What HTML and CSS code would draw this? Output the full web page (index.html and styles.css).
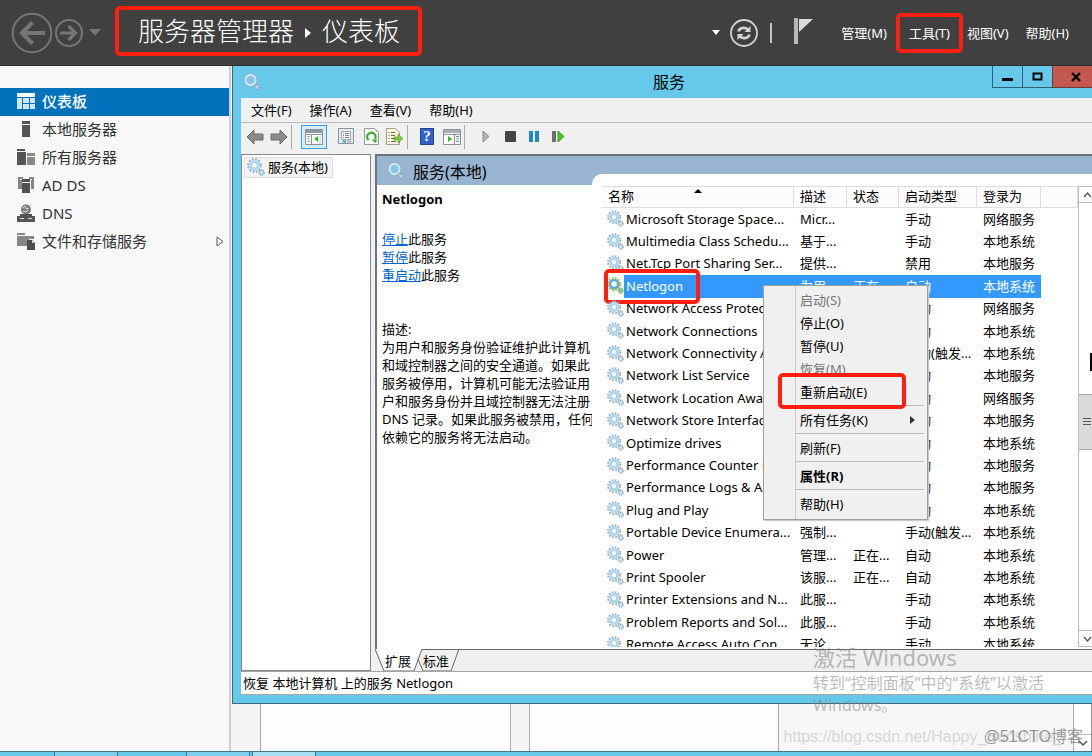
FILE: index.html
```html
<!DOCTYPE html>
<html lang="zh-CN">
<head>
<meta charset="utf-8">
<title>服务器管理器</title>
<link rel="stylesheet" href="styles.css">
</head>
<body>
<svg class="defs" width="0" height="0" aria-hidden="true">
  <symbol id="gear" viewBox="0 0 18 18">
    <circle cx="7.5" cy="7.5" r="6.400" fill="none" stroke="#8ba9bd" stroke-width="2" stroke-dasharray="1.700 1.650"/>
    <circle cx="7.5" cy="7.5" r="4.400" fill="#fff" stroke="#b3daf1" stroke-width="2.800"/>
    <circle cx="7.5" cy="7.5" r="2.800" fill="#fff" stroke="#93aebf" stroke-width=".7"/>
    <circle cx="14.500" cy="14.500" r="2.600" fill="#b9d7ea" stroke="#8caabf" stroke-width="1.400" stroke-dasharray="1.200 1"/>
    <circle cx="14.500" cy="14.500" r=".8" fill="#fff"/>
  </symbol>
  <symbol id="gear-on" viewBox="0 0 18 18">
    <circle cx="7.5" cy="7.5" r="6.400" fill="none" stroke="#9fce2c" stroke-width="2.200" stroke-dasharray="1.900 1.450"/>
    <circle cx="7.5" cy="7.5" r="4.300" fill="#fff" stroke="#5fa9e4" stroke-width="2.800"/>
    <circle cx="14.500" cy="14.500" r="2.600" fill="#5fa9e4" stroke="#9fce2c" stroke-width="1.600" stroke-dasharray="1.200 1"/>
    <circle cx="14.500" cy="14.500" r=".8" fill="#fff"/>
  </symbol>
  <symbol id="ring" viewBox="0 0 18 18">
    <circle cx="7.5" cy="7" r="5.200" fill="#86c3e6" stroke="#d3e5f0" stroke-width="2.400"/>
    <circle cx="7.5" cy="7" r="6.600" fill="none" stroke="#86a9c0" stroke-width=".8"/>
    <circle cx="14" cy="14" r="2.500" fill="#b8d4e6" stroke="#7d9db5" stroke-width="1.500" stroke-dasharray="1.200 .9"/>
  </symbol>
</svg>

<header class="top">
  <nav class="history">
    <button class="plain" aria-label="后退"><svg width="42" height="42" viewBox="0 0 42 42" fill="none" stroke="#767676"><circle cx="21" cy="21" r="19.3" stroke-width="2"/><path d="M34 21H11M21.5 10.500 11 21l10.500 10.500" stroke-width="4.200"/></svg></button>
    <button class="plain" aria-label="前进"><svg width="30" height="30" viewBox="0 0 30 30" fill="none" stroke="#767676"><circle cx="15" cy="15" r="13" stroke-width="2"/><path d="M6 15h15M14.500 8l7 7-7 7" stroke-width="3.200"/></svg></button>
    <button class="plain" aria-label="历史记录"><svg width="12" height="8" viewBox="0 0 12 8"><path d="M0 0h12L6 7z" fill="#767676"/></svg></button>
  </nav>
  <h1 class="crumbs mark">服务器管理器<svg width="6" height="10" viewBox="0 0 6 10"><path d="M0 0l6 5-6 5z" fill="#fff"/></svg>仪表板</h1>
  <div class="top-tools">
    <button class="plain" aria-label="更多"><svg width="8" height="5" viewBox="0 0 8 5"><path d="M0 0h8L4 5z" fill="#fff"/></svg></button>
    <button class="plain refresh" aria-label="刷新"><svg width="28" height="28" viewBox="0 0 28 28" fill="none" stroke="#d4d4d4"><circle cx="14" cy="14" r="13" stroke-width="1.800"/><path d="M8.500 12.500c.8-3.500 6-5 9.500-2M19.500 15.500c-.8 3.500-6 5-9.500 2" stroke-width="2.600"/><path d="M20.500 7v6h-6zM7.500 21v-6h6z" fill="#d4d4d4" stroke="none"/></svg></button>
    <span class="bar"></span>
    <button class="plain flag" aria-label="通知"><svg width="19" height="26" viewBox="0 0 19 26"><path d="M0 0h4v26H0z" fill="#b9b9b9"/><path d="M5 1h14L5 14z" fill="#dcdcdc"/></svg></button>
  </div>
  <nav class="top-menu">
    <button class="plain">管理(M)</button>
    <button class="plain mark tools">工具(T)</button>
    <button class="plain">视图(V)</button>
    <button class="plain help">帮助(H)</button>
  </nav>
</header>

<main class="workspace">
  <nav class="side">
    <a class="side-item current" href="#"><svg width="18" height="18" viewBox="0 0 18 18"><path d="M0 1h18v4H0z" fill="#fff"/><path d="M0 6h5v11H0zM6 6h6v5H6zM6 12h6v5H6zM13 6h5v5h-5zM13 12h5v5h-5z" fill="#cfe6f5"/></svg>仪表板</a>
    <a class="side-item" href="#"><svg width="18" height="18" viewBox="0 0 18 18"><path d="M5 1h8v3H5zM5 5h8v12H5z" fill="#555"/></svg>本地服务器</a>
    <a class="side-item" href="#"><svg width="18" height="18" viewBox="0 0 18 18"><path d="M0 1h8v2H0zM0 4h9v13H0z" fill="#555"/><path d="M10 5h8v3h-8zM10 9h8v8h-8z" fill="#888"/></svg>所有服务器</a>
    <a class="side-item" href="#"><svg width="18" height="18" viewBox="0 0 18 18"><path d="M1 1h5v2H3v1h2v9H1zM12 1h5v12h-3V4h1V3h-3z" fill="#858585"/><path d="M5 3h8v3H5zM5 7h8v10H5z" fill="#505050"/></svg>AD DS</a>
    <a class="side-item" href="#"><svg width="18" height="18" viewBox="0 0 18 18"><circle cx="9" cy="5.500" r="5" fill="#7b7b7b"/><path d="M6 4l2-2 1 3 3-1M6 7l3 1 2-2" stroke="#ddd" fill="none"/><path d="M3 10h12v2H3zM0 12h18v6H0z" fill="#555"/><path d="M3 14.500h4M11 14.500h4" stroke="#ddd"/></svg>DNS</a>
    <a class="side-item" href="#"><svg width="18" height="18" viewBox="0 0 18 18"><path d="M0 1h8v2H0zM0 4h9v10H0zM9 4h8v3h-5v7H9z" fill="#888"/><path d="M10 8h5l3 3v7h-8z" fill="#4d4d4d"/><path d="M15 8v3h3" fill="#ccc"/></svg>文件和存储服务<svg class="expand" width="8" height="11" viewBox="0 0 8 11"><path d="M1 1l6 4.500L1 10z" fill="#fff" stroke="#555"/></svg></a>
  </nav>
  <div class="board">
    <div class="tile"></div>
    <div class="tile"></div>
    <div class="tile wide"></div>
    <div class="board-scroll"><span class="board-arrow"><svg width="10" height="6" viewBox="0 0 10 6"><path d="M1 1l4 4 4-4" fill="none" stroke="#555" stroke-width="1.500"/></svg></span></div>
  </div>

  <section class="window" aria-label="服务">
    <div class="titlebar">
      <svg width="18" height="18"><use href="#ring"/></svg>
      <h2 class="window-title">服务</h2>
      <div class="window-buttons">
        <button class="wbtn" aria-label="最小化"><svg width="11" height="11"><path d="M0 7h11v3H0z"/></svg></button>
        <button class="wbtn" aria-label="最大化"><svg width="11" height="11"><path d="M1.500 2.500h8v6h-8z" fill="none" stroke="#000" stroke-width="2"/></svg></button>
        <button class="wbtn close" aria-label="关闭"><svg width="10" height="10"><path d="M1 1l8 8M9 1L1 9" stroke="#000" stroke-width="2.400"/></svg></button>
      </div>
    </div>
    <div class="client">
      <div class="menubar">
        <button class="plain">文件(F)</button><button class="plain">操作(A)</button><button class="plain">查看(V)</button><button class="plain">帮助(H)</button>
      </div>
      <div class="toolbar">
        <button class="tool" aria-label="后退"><svg width="18" height="16" viewBox="0 0 18 16"><path d="M1 8l7-7v4h9v6H8v4z" fill="#8c8c8c" stroke="#6a6a6a"/></svg></button>
        <button class="tool" aria-label="前进"><svg width="18" height="16" viewBox="0 0 18 16"><path d="M17 8l-7-7v4H1v6h9v4z" fill="#8c8c8c" stroke="#6a6a6a"/></svg></button>
        <span class="tsep"></span>
        <button class="tool pressed" aria-label="显示/隐藏控制台树"><svg width="18" height="16" viewBox="0 0 18 16"><path d="M.5.5h17v15H.5z" fill="#fff" stroke="#8b929a"/><path d="M1 1h16v3H1z" fill="#8b98a8"/><path d="M1 5.500h16M6.500 6v9" stroke="#8b929a"/><path d="M2.500 7.500h2M2.500 10h2M2.500 12.500h2" stroke="#6c86a8"/><path d="M13 7v6l-4-3z" fill="#35b52a"/><path d="M13.500 7h3v8h-3z" fill="#dce6ee"/></svg></button>
        <button class="tool prop" aria-label="属性"><svg width="16" height="17" viewBox="0 0 16 17"><path d="M.5.500h15v15H.5z" fill="#e6ebf0" stroke="#8d9298"/><path d="M3.500 3.500h9v8h-9z" fill="#fff" stroke="#9aa8b5"/><path d="M5 5.500h1M7 5.500h4M5 7.500h1M7 7.500h4M5 9.500h1M7 9.500h4" stroke="#6c86a8"/><path d="M5 13.500h3" stroke="#28a6dd" stroke-width="2"/><path d="M9 13.500h4" stroke="#a9b4be" stroke-width="2"/></svg></button>
        <button class="tool" aria-label="刷新"><svg width="15" height="17" viewBox="0 0 15 17"><path d="M.5.500h10l4 4v12H.5z" fill="#fdfdfd" stroke="#999"/><path d="M4.500 12A4.200 4.200 0 1 1 11 11" fill="none" stroke="#37a92c" stroke-width="2.200"/><path d="M7.500 11.500h6l-2 3.500z" fill="#37a92c"/></svg></button>
        <button class="tool" aria-label="导出列表"><svg width="18" height="17" viewBox="0 0 18 17"><path d="M.5.500h9l4 4v12H.5z" fill="#fdf8dc" stroke="#a29e88"/><path d="M2.500 4.500h1M5 4.500h4M2.500 7.500h1M5 7.500h4M2.500 10.500h1M5 10.500h3M2.500 13.500h1M5 13.500h5" stroke="#666"/><path d="M8 9h4V6l5 4.500-5 4.500v-3H8z" fill="#78cf3c" stroke="#4c9a24" stroke-width=".6"/></svg></button>
        <span class="tsep"></span>
        <button class="tool help-tool" aria-label="帮助"><span class="help-icon">?</span></button>
        <button class="tool" aria-label="显示操作窗格"><svg width="18" height="16" viewBox="0 0 18 16"><path d="M.5.500h17v15H.5z" fill="#fff" stroke="#8b929a"/><path d="M1 1h16v3H1z" fill="#a8b0b8"/><path d="M1 5.500h16M11.500 6v9" stroke="#8b929a"/><path d="M13 7.500h3M13 10h3M13 12.500h3" stroke="#6c86a8"/><path d="M5 7v6l4-3z" fill="#35b52a"/></svg></button>
        <span class="tsep"></span>
        <button class="tool play" aria-label="启动"><svg width="8" height="13" viewBox="0 0 8 13"><path d="M1 1l6 5.500L1 12z" fill="#b5b5b5" stroke="#858585"/></svg></button>
        <button class="tool" aria-label="停止"><svg width="11" height="11"><rect width="11" height="11" rx="1" fill="#444"/></svg></button>
        <button class="tool" aria-label="暂停"><svg width="10" height="11"><path d="M0 0h4v11H0zM6 0h4v11H6z" fill="#1f86d2"/></svg></button>
        <button class="tool" aria-label="重新启动"><svg width="13" height="13"><path d="M0 1h4v11H0z" fill="#6d6d6d"/><path d="M6 1l6 5.500L6 12z" fill="#4cc52d" stroke="#2f9d1c"/></svg></button>
      </div>
      <div class="panes">
        <div class="tree"><button class="node"><svg width="18" height="18"><use href="#gear"/></svg>服务(本地)</button></div>
        <div class="result">
          <div class="result-body">
            <div class="detail-col">
              <div class="detail-head"><svg width="18" height="18"><use href="#ring"/></svg>服务(本地)</div>
              <div class="detail">
                <h3>Netlogon</h3>
                <p class="actions"><a href="#">停止</a>此服务<br><a href="#">暂停</a>此服务<br><a href="#">重启动</a>此服务</p>
                <p>描述:<br>为用户和服务身份验证维护此计算机<br>和域控制器之间的安全通道。如果此<br>服务被停用，计算机可能无法验证用<br>户和服务身份并且域控制器无法注册<br>DNS 记录。如果此服务被禁用，任何<br>依赖它的服务将无法启动。</p>
              </div>
            </div>
            <div class="list-col">
              <div class="list">
                <div class="table-clip">
                <table class="services">
                  <colgroup><col class="c-name"><col class="c-desc"><col class="c-state"><col class="c-type"><col class="c-user"><col></colgroup>
                  <thead><tr><th class="sorted">名称<svg width="8" height="4"><path d="M0 4l4-4 4 4z"/></svg></th><th>描述</th><th>状态</th><th>启动类型</th><th>登录为</th><th></th></tr></thead>
                  <tbody>
                    <tr><td><svg width="17" height="17"><use href="#gear"/></svg>Microsoft Storage Space...</td><td>Micr...</td><td></td><td>手动</td><td>网络服务</td><td></td></tr>
                    <tr><td><svg width="17" height="17"><use href="#gear"/></svg>Multimedia Class Schedu...</td><td>基于...</td><td></td><td>手动</td><td>本地系统</td><td></td></tr>
                    <tr><td><svg width="17" height="17"><use href="#gear"/></svg>Net.Tcp Port Sharing Ser...</td><td>提供...</td><td></td><td>禁用</td><td>本地服务</td><td></td></tr>
                    <tr class="selected"><td><svg width="17" height="17"><use href="#gear-on"/></svg>Netlogon<span class="mark row-mark"></span></td><td>为用...</td><td>正在...</td><td>自动</td><td>本地系统</td><td></td></tr>
                    <tr><td><svg width="17" height="17"><use href="#gear"/></svg>Network Access Protecti...</td><td></td><td></td><td>手动</td><td>网络服务</td><td></td></tr>
                    <tr><td><svg width="17" height="17"><use href="#gear"/></svg>Network Connections</td><td></td><td></td><td>手动</td><td>本地系统</td><td></td></tr>
                    <tr><td><svg width="17" height="17"><use href="#gear"/></svg>Network Connectivity As...</td><td></td><td></td><td>手动(触发...</td><td>本地系统</td><td></td></tr>
                    <tr><td><svg width="17" height="17"><use href="#gear"/></svg>Network List Service</td><td></td><td></td><td>手动</td><td>本地服务</td><td></td></tr>
                    <tr><td><svg width="17" height="17"><use href="#gear"/></svg>Network Location Awar...</td><td></td><td></td><td>自动</td><td>网络服务</td><td></td></tr>
                    <tr><td><svg width="17" height="17"><use href="#gear"/></svg>Network Store Interface...</td><td></td><td></td><td>自动</td><td>本地服务</td><td></td></tr>
                    <tr><td><svg width="17" height="17"><use href="#gear"/></svg>Optimize drives</td><td></td><td></td><td>手动</td><td>本地系统</td><td></td></tr>
                    <tr><td><svg width="17" height="17"><use href="#gear"/></svg>Performance Counter D...</td><td></td><td></td><td>手动</td><td>本地服务</td><td></td></tr>
                    <tr><td><svg width="17" height="17"><use href="#gear"/></svg>Performance Logs &amp; Al...</td><td></td><td></td><td>手动</td><td>本地服务</td><td></td></tr>
                    <tr><td><svg width="17" height="17"><use href="#gear"/></svg>Plug and Play</td><td></td><td></td><td>手动</td><td>本地系统</td><td></td></tr>
                    <tr><td><svg width="17" height="17"><use href="#gear"/></svg>Portable Device Enumera...</td><td>强制...</td><td></td><td>手动(触发...</td><td>本地系统</td><td></td></tr>
                    <tr><td><svg width="17" height="17"><use href="#gear"/></svg>Power</td><td>管理...</td><td>正在...</td><td>自动</td><td>本地系统</td><td></td></tr>
                    <tr><td><svg width="17" height="17"><use href="#gear"/></svg>Print Spooler</td><td>该服...</td><td>正在...</td><td>自动</td><td>本地系统</td><td></td></tr>
                    <tr><td><svg width="17" height="17"><use href="#gear"/></svg>Printer Extensions and N...</td><td>此服...</td><td></td><td>手动</td><td>本地系统</td><td></td></tr>
                    <tr><td><svg width="17" height="17"><use href="#gear"/></svg>Problem Reports and Sol...</td><td>此服...</td><td></td><td>手动</td><td>本地系统</td><td></td></tr>
                    <tr><td><svg width="17" height="17"><use href="#gear"/></svg>Remote Access Auto Con...</td><td>无论...</td><td></td><td>手动</td><td>本地系统</td><td></td></tr>
                  </tbody>
                </table>
                </div>
                <div class="scroll">
                  <span class="arrow"><svg width="9" height="6" viewBox="0 0 9 6"><path d="M1 5l3.500-4L8 5" fill="none" stroke="#555" stroke-width="1.300"/></svg></span>
                  <span class="track"><span class="caret"></span><span class="thumb"></span></span>
                  <span class="arrow down"><svg width="9" height="6" viewBox="0 0 9 6"><path d="M1 1l3.500 4L8 1" fill="none" stroke="#555" stroke-width="1.300"/></svg></span>
                </div>
              </div>
              <div class="context" role="menu">
                <button class="mi" disabled>启动(S)</button>
                <button class="mi">停止(O)</button>
                <button class="mi">暂停(U)</button>
                <button class="mi" disabled>恢复(M)</button>
                <button class="mi">重新启动(E)<span class="mark menu-mark"></span></button>
                <hr>
                <button class="mi sub">所有任务(K)<svg width="5" height="8"><path d="M0 0l5 4-5 4z" fill="#333"/></svg></button>
                <hr>
                <button class="mi">刷新(F)</button>
                <hr>
                <button class="mi strong">属性(R)</button>
                <hr>
                <button class="mi">帮助(H)</button>
              </div>
            </div>
          </div>
          <div class="tabs">
            <svg class="tab-shape" width="90" height="22" viewBox="0 0 90 22"><path d="M0 0l9 22h30l8-22z" fill="#fff"/><path d="M0 0l9 22h30l8-22H90" fill="none" stroke="#666"/><path d="M43 10l5 12h28l8-22" fill="none" stroke="#666"/></svg>
            <button class="plain">扩展</button><button class="plain">标准</button>
          </div>
        </div>
      </div>
      <div class="status">恢复 本地计算机 上的服务 Netlogon</div>
    </div>
  </section>

  <div class="activate"><p class="act-title">激活 Windows</p><p>转到“控制面板”中的“系统”以激活<br>Windows。</p></div>
  <div class="stamp url">https://blog.csdn.net/Happy_Sunshine_</div>
  <div class="stamp">@51CTO博客</div>
</main>
<footer class="taskbar"><span class="task first"></span><span class="task"></span><span class="task active"></span></footer>
</body>
</html>
```

FILE: styles.css
```css
* { box-sizing: border-box; }

body {
  margin: 0;
  height: 100vh;
  min-height: 600px;
  display: flex;
  flex-direction: column;
  overflow: hidden;
  font: 13px/18px "Noto Sans", "Noto Sans CJK SC", sans-serif;
  color: #000;
}

h1, h2, h3, p { margin: 0; font-weight: 400; }
svg { flex: none; }
.defs { position: absolute; }

button { font: inherit; color: inherit; cursor: default; white-space: nowrap; }
.plain { border: 0; background: none; padding: 0; display: flex; align-items: center; }

.mark { border: 4px solid #ff1f10; border-radius: 5px; }

/* header */
.top {
  height: 66px;
  flex: none;
  display: flex;
  align-items: center;
  background: #404040;
  border-bottom: 1px solid #2f2f2f;
  color: #fff;
}
.history { display: flex; align-items: center; gap: 5px; padding-left: 11px; }
.history .plain:nth-child(2) { margin-left: -4px; }
.crumbs {
  display: flex;
  align-items: center;
  gap: 11px;
  height: 50px;
  margin: 0 auto 4px 14px;
  padding: 0 18px 0 19px;
  font-size: 26px;
  line-height: 36px;
  font-weight: 300;
  white-space: nowrap;
}
.crumbs svg { margin-top: 4px; }
.top-tools { display: flex; align-items: center; margin-right: 28px; }
.refresh { margin-left: 10px; }
.bar { width: 2px; height: 20px; margin: 0 22px 0 12px; background: #c4c4c4; }
.flag { margin-bottom: 4px; }
.top-menu { display: flex; align-items: center; padding-right: 23px; }
.tools { height: 40px; margin: 0 4px 0 9px; padding: 0 9px; }
.help { margin-left: 17px; }

/* workspace */
.workspace { flex: 1; min-height: 0; display: flex; position: relative; background: #f5f5f5; }
.side {
  width: 231px;
  flex: none;
  padding-top: 22px;
  background: #f8f8f8;
  border-right: 2px solid #cfcfcf;
}
.side-item {
  display: flex;
  align-items: center;
  gap: 7px;
  height: 28px;
  padding: 0 5px 2px 17px;
  font-size: 15px;
  color: #333;
  text-decoration: none;
}
.side-item.current { background: #0072bc; color: #fff; font-weight: 500; }
.expand { margin-left: auto; }

.board { flex: 1; display: flex; padding-left: 29px; }
.tile { width: 251px; margin-right: 18px; background: #fdfdfd; border: 0 solid #aaa; border-width: 0 1px; }
.tile:nth-child(2) { width: 249px; margin-right: 0; border-right: 0; }
.tile.wide { flex: 1; width: auto; margin: 0; background: #f7f7f7; }
.board-scroll {
  width: 18px;
  display: flex;
  flex-direction: column;
  justify-content: flex-end;
  background: #fff;
  border-right: 1px solid #999;
}
.board-arrow {
  height: 17px;
  display: flex;
  align-items: center;
  justify-content: center;
  border-top: 1px solid #bbb;
}

/* services window */
.window {
  position: absolute;
  inset: 0 0 47px 232px;
  display: flex;
  flex-direction: column;
  padding: 0 0 8px 8px;
  background: #66c9ea;
  border: 1px solid #3d6a7c;
  border-width: 0 0 1px 1px;
}
.titlebar { height: 32px; flex: none; display: flex; align-items: center; padding-left: 2px; }
.window-title { flex: 1; padding-left: 85px; text-align: center; font-size: 16px; line-height: 22px; }
.window-buttons { display: flex; align-self: flex-start; }
.wbtn {
  width: 30px;
  height: 22px;
  display: flex;
  align-items: center;
  justify-content: center;
  padding: 0;
  background: none;
  border: 1px solid #2f5f71;
  border-width: 0 0 1px 1px;
}
.wbtn.close { width: 40px; padding-left: 6px; background: #c4574e; border-color: #6c3a3a; }

.client { flex: 1; min-height: 0; display: flex; flex-direction: column; background: #f0f0f0; }
.menubar { height: 25px; flex: none; display: flex; gap: 18px; padding-left: 10px; border-bottom: 1px solid #bbb; }
.toolbar { height: 31px; flex: none; display: flex; align-items: center; padding: 0 0 4px 2px; }
.tool {
  width: 24px;
  height: 24px;
  display: flex;
  align-items: center;
  justify-content: center;
  padding: 0;
  border: 0;
  background: none;
}
.tool.pressed { width: 26px; margin: 0 7px 0 9px; background: #d9ecfa; border: 1px solid #35a0e0; }
.tsep { width: 1px; height: 24px; background: #aaa; }
.help-tool { margin-left: 7px; margin-right: 1px; }
.prop { margin-right: 1px; }
.play { margin-left: 9px; }
.help-icon {
  width: 14px;
  height: 17px;
  background: #3561c9;
  border: 1px solid #24418c;
  color: #fff;
  font: 700 15px/15px "Liberation Serif", serif;
}

.panes { flex: 1; min-height: 0; display: flex; gap: 4px; }
.tree { width: 130px; flex: none; padding: 2px; background: #fff; border: 1px solid #828790; }
.node {
  display: flex;
  align-items: center;
  gap: 3px;
  height: 21px;
  padding: 0 4px 2px 2px;
  background: #f3f3f3;
  border: 1px solid #dedede;
}
.result { flex: 1; min-width: 0; display: flex; flex-direction: column; }
.result-body {
  flex: 1;
  min-height: 0;
  display: flex;
  background: #fff;
  border: 2px solid #6f7479;
  border-width: 2px 0 0 2px;
}
.detail-col { width: 215px; flex: none; }
.detail-head {
  height: 29px;
  display: flex;
  align-items: center;
  gap: 8px;
  padding: 3px 0 0 10px;
  background: #99b4d1;
  font-size: 16px;
}
.detail-head svg { margin-bottom: 3px; }
.detail { padding: 5px 0 0 5px; white-space: nowrap; }
.detail h3 { font-size: 13px; font-weight: 700; }
.detail .actions { margin: 22px 0 36px; }
.detail a { color: #0066cc; }

.list-col {
  flex: 1;
  min-width: 0;
  display: flex;
  flex-direction: column;
  position: relative;
  padding-top: 18px;
  background: #99b4d1;
}
.list {
  flex: 1;
  min-height: 0;
  display: flex;
  padding: 12px 0 2px 10px;
  background: #fff;
  border-top-left-radius: 10px;
}
.table-clip { flex: 1; min-width: 0; overflow: hidden; }
.services {
  width: 100%;
  height: 470px;
  table-layout: fixed;
  border-collapse: separate;
  border-spacing: 0;
  white-space: nowrap;
}
.c-name { width: 192px; }
.c-desc { width: 53px; }
.c-state { width: 52px; }
.c-type { width: 78px; }
.c-user { width: 64px; }
.services th {
  height: 22px;
  padding: 0 0 2px 6px;
  text-align: left;
  font-weight: 400;
  background: #fcfcfc;
  border: 1px solid #dedede;
  border-width: 1px 1px 1px 0;
}
.services .sorted { position: relative; }
.sorted svg { position: absolute; top: 2px; left: 92px; }
.services td { padding: 0 0 1px 6px; }
.services td:first-child { padding-left: 5px; position: relative; }
.services td svg { vertical-align: middle; margin: -3px 2px 0 0; }
.selected td { color: #fff; background: #3399ff; }
.selected td:first-child { background: linear-gradient(to right, #fff 22px, #3399ff 22px); }
.selected td:last-child { background: none; }
.row-mark { position: absolute; left: 2px; top: -6px; width: 96px; height: 35px; }

.scroll { width: 14px; flex: none; display: flex; flex-direction: column; border-left: 1px solid #bbb; }
.arrow {
  height: 17px;
  display: flex;
  align-items: center;
  padding-left: 4px;
  border: 1px solid #bbb;
  border-width: 1px 0;
}
.track { flex: 1; display: flex; flex-direction: column; align-items: flex-end; }
.caret { width: 2px; height: 18px; margin: 150px 0 23px; background: #000; }
.thumb {
  width: 13px;
  height: 56px;
  background: linear-gradient(#555, #555) 4px 23px / 8px 1px no-repeat,
    linear-gradient(#555, #555) 4px 26px / 8px 1px no-repeat,
    linear-gradient(#555, #555) 4px 29px / 8px 1px no-repeat, #dadada;
  border: 1px solid #aaa;
  border-width: 1px 0;
}

/* context menu */
.context {
  position: absolute;
  left: 171px;
  top: 129px;
  width: 165px;
  padding: 2px 3px 4px 31px;
  background: linear-gradient(#ccc, #ccc) 31px 0 / 1px 100% no-repeat, #f0f0f0;
  border: 1px solid #a0a0a0;
  box-shadow: 1px 1px 1px #ccc;
}
.mi {
  position: relative;
  width: 100%;
  height: 23px;
  display: flex;
  align-items: center;
  padding: 0 9px 0 5px;
  border: 0;
  background: none;
}
.mi:disabled { color: #777; }
.mi.strong { font-weight: 700; }
.mi.sub { justify-content: space-between; }
.context hr { margin: 2px 0; border: 0; height: 1px; background: #bbb; }
.menu-mark { position: absolute; left: -17px; top: -7px; width: 128px; height: 36px; }

.tabs {
  position: relative;
  height: 22px;
  flex: none;
  display: flex;
  gap: 12px;
  padding-left: 10px;
  border-top: 1px solid #666;
}
.tabs .plain { position: relative; }
.tab-shape { position: absolute; left: 0; top: -1px; }
.status {
  height: 24px;
  flex: none;
  padding: 2px 2px;
  background: #fff;
  border: 1px solid #a5a5a5;
  border-width: 1px 0;
}

/* overlays */
.activate {
  position: absolute;
  right: 48px;
  bottom: 35px;
  color: rgba(130, 130, 130, .55);
  font-size: 16px;
  line-height: 22px;
}
.act-title { font-size: 22px; line-height: 30px; }
.stamp {
  position: absolute;
  right: 9px;
  bottom: 3px;
  font: 16px/22px "Liberation Sans", "Noto Sans CJK SC", sans-serif;
  color: rgba(110, 110, 110, .7);
}
.stamp.url { color: #d6d6d6; right: 30px; }

.taskbar { height: 5px; flex: none; display: flex; background: #66c9ea; border-top: 1px solid #4a7180; }
.task { width: 64px; margin-right: 2px; background: #7dd0ee; border: 1px solid #3d7489; border-width: 0 1px; }
.task.first { margin: 0 68px 0 54px; }
.task.active { background: #a5dff3; }
```
